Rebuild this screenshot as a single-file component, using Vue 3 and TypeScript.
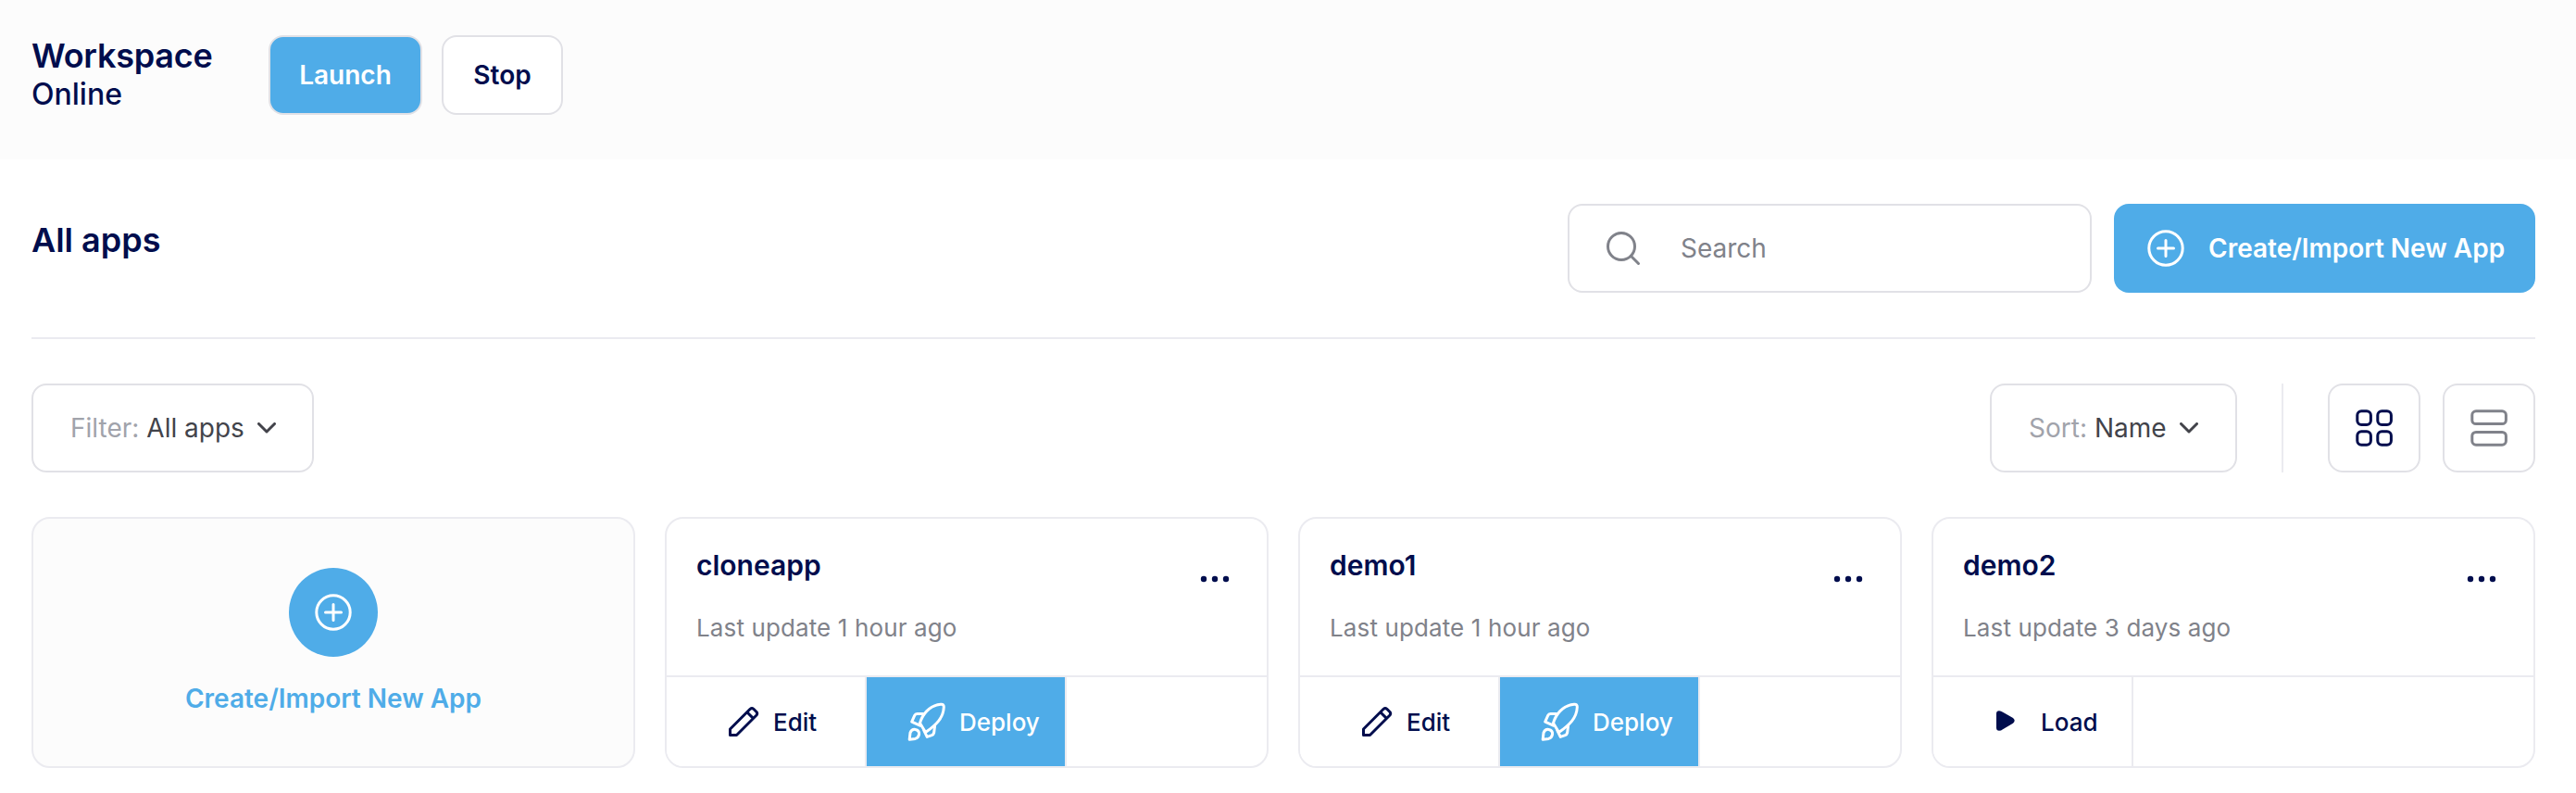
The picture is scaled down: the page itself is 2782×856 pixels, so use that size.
<script setup lang="ts">
interface AppCard {
  name: string
  updated: string
  loaded: boolean
}

const apps: AppCard[] = [
  { name: 'cloneapp', updated: 'Last update 1 hour ago', loaded: true },
  { name: 'demo1', updated: 'Last update 1 hour ago', loaded: true },
  { name: 'demo2', updated: 'Last update 3 days ago', loaded: false },
]
</script>

<template>
  <div class="page">
    <header class="workspace">
      <div class="status">
        <div class="status-name">Workspace</div>
        <div class="status-state">Online</div>
      </div>
      <div class="workspace-actions">
        <button class="btn primary launch">Launch</button>
        <button class="btn stop">Stop</button>
      </div>
    </header>

    <main class="content">
      <section class="titlebar">
        <h1 class="title">All apps</h1>
        <label class="search">
          <svg class="search-icon" width="40" height="40" viewBox="0 0 40 40">
            <circle cx="18" cy="18" r="14.5" />
            <path d="M28.3 28.3L36.5 36.5" />
          </svg>
          <span>Search</span>
        </label>
        <button class="create">
          <svg class="plus-icon" width="40" height="40" viewBox="0 0 40 40">
            <circle cx="20" cy="20" r="18.2" />
            <path d="M20 11.5V28.5M11.5 20H28.5" />
          </svg>
          <span>Create/Import New App</span>
        </button>
      </section>

      <section class="toolbar">
        <button class="select">
          <span class="select-label">Filter:</span>
          <span class="select-value">All apps</span>
          <svg class="chevron" width="20" height="12" viewBox="0 0 20 12"><path d="M1.5 1.5L10 10L18.5 1.5" /></svg>
        </button>
        <div class="toolbar-right">
          <button class="select sort">
            <span class="select-label">Sort:</span>
            <span class="select-value">Name</span>
            <svg class="chevron" width="20" height="12" viewBox="0 0 20 12"><path d="M1.5 1.5L10 10L18.5 1.5" /></svg>
          </button>
          <i class="separator"></i>
          <div class="views">
            <button class="view active">
              <svg width="40" height="40" viewBox="0 0 40 40">
                <rect x="1.8" y="1.8" width="14.6" height="14.6" rx="4.5" />
                <rect x="23.8" y="1.8" width="14.6" height="14.6" rx="4.5" />
                <rect x="1.8" y="23.7" width="14.6" height="14.6" rx="4.5" />
                <rect x="23.8" y="23.7" width="14.6" height="14.6" rx="4.5" />
              </svg>
            </button>
            <button class="view">
              <svg width="40" height="40" viewBox="0 0 40 40">
                <rect x="1.8" y="1.8" width="36.6" height="13.8" rx="4.2" />
                <rect x="1.8" y="24.4" width="36.6" height="13.8" rx="4.2" />
              </svg>
            </button>
          </div>
        </div>
      </section>

      <section class="grid">
        <article class="card new">
          <span class="bubble">
            <svg class="plus-icon" width="40" height="40" viewBox="0 0 40 40">
              <circle cx="20" cy="20" r="18.2" />
              <path d="M20 11.5V28.5M11.5 20H28.5" />
            </svg>
          </span>
          <span class="new-label">Create/Import New App</span>
        </article>

        <article v-for="app in apps" :key="app.name" class="card">
          <div class="card-head">
            <div>
              <h2 class="card-name">{{ app.name }}</h2>
              <p class="card-updated">{{ app.updated }}</p>
            </div>
            <svg class="dots" width="32" height="8" viewBox="0 0 32 8">
              <circle cx="4" cy="4" r="3.2" />
              <circle cx="16" cy="4" r="3.2" />
              <circle cx="28" cy="4" r="3.2" />
            </svg>
          </div>
          <div class="card-actions">
            <template v-if="app.loaded">
              <button class="action edit">
                <svg width="34" height="34" viewBox="0 0 34 34">
                  <path d="M2.5 25L24.2 3.3Q26 1.8 27.8 3.3L31 6.5Q32.4 8.2 31 10L9.5 31.5H2.5Z M20.8 6.8L27.4 13.4" />
                </svg>
                <span>Edit</span>
              </button>
              <button class="action deploy">
                <svg width="42" height="42" viewBox="0 0 42 42">
                  <path d="M13.5 22.5C16 14 23 3.5 36 2.2Q39.5 1.8 39.3 5.5C38.8 17 31 24.5 19.5 32.5Z" />
                  <path d="M17 12.4H10.5Q8.5 12.4 7.8 14.2L4.7 21.2L13.5 25.2" />
                  <path d="M29.6 25.4L28.6 33.2Q28.2 35 26.4 35.6L21.2 37.4L17.8 30.4" />
                  <path d="M2.2 40.2L3 33Q4.3 29 8.5 29.4Q13 30.2 12.6 34.6Q12 38.4 8.4 39.4Z" />
                </svg>
                <span>Deploy</span>
              </button>
            </template>
            <button v-else class="action load">
              <svg width="20" height="22" viewBox="0 0 20 22">
                <path d="M0 3.5Q0 0.3 3 0.3Q5 0.3 7 1.8L18 8Q21.4 10.8 18 13.8L7 20.2Q5 21.7 3 21.7Q0 21.7 0 18.5Z" />
              </svg>
              <span>Load</span>
            </button>
          </div>
        </article>
      </section>
    </main>
  </div>
</template>

<style>
body {
  margin: 0;
  background: #fff;
}
</style>

<style scoped>
.page {
  box-sizing: border-box;
  width: 2782px;
  height: 856px;
  overflow: hidden;
  background: #fff;
  color: #000d4d;
  font-family: Inter, "Liberation Sans", sans-serif;
  font-size: 28px;
}
.page * {
  box-sizing: border-box;
}
.page button {
  margin: 0;
  padding: 0;
  font-family: inherit;
  font-size: 28px;
  color: inherit;
  background: #fff;
}
svg {
  flex: none;
  fill: none;
  stroke: currentColor;
  stroke-width: 3;
  stroke-linecap: round;
  stroke-linejoin: round;
}
.workspace {
  display: flex;
  align-items: flex-start;
  height: 172px;
  padding: 38px 34px 0;
  background: #fcfcfc;
}
.status {
  width: 256px;
}
.status-name {
  font-size: 36px;
  font-weight: 600;
  line-height: 44px;
  letter-spacing: -0.25px;
}
.status-state {
  font-size: 32px;
  font-weight: 500;
  line-height: 39px;
}
.workspace-actions {
  display: flex;
  gap: 21px;
}
.workspace .btn {
  height: 86px;
  border: 2px solid #e1e1e6;
  border-radius: 16px;
  font-weight: 600;
}
.workspace .primary {
  background: #4face8;
  color: #fff;
}
.launch {
  width: 166px;
}
.stop {
  width: 131px;
}
.content {
  padding: 48px 44px 0 34px;
}
.titlebar {
  display: flex;
  height: 146px;
  border-bottom: 2px solid #ebebf0;
}
.title {
  flex: 1;
  margin: 16px 0 0;
  font-size: 36px;
  line-height: 46px;
  font-weight: 600;
}
.search {
  display: flex;
  align-items: center;
  width: 566px;
  height: 96px;
  margin-right: 24px;
  padding-left: 38px;
  border: 2px solid #e1e1e6;
  border-radius: 16px;
  color: #80828a;
}
.search-icon {
  margin-right: 42px;
}
.create {
  display: flex;
  align-items: center;
  width: 455px;
  height: 96px;
  border: 0;
  border-radius: 16px;
}
.page .create {
  padding-left: 36px;
  background: #4face8;
  color: #fff;
  font-weight: 600;
}
.create .plus-icon {
  margin-right: 26px;
}
.toolbar {
  display: flex;
  justify-content: space-between;
  height: 96px;
  margin: 48px 0;
}
.toolbar-right {
  display: flex;
}
.select {
  display: flex;
  align-items: center;
  width: 305px;
  border: 2px solid #e1e1e6;
  border-radius: 16px;
}
.page .select {
  padding-left: 40px;
}
.select-label {
  margin-right: 8px;
  color: #a1a3ab;
}
.select-value {
  color: #42434a;
}
.chevron {
  margin-left: 14px;
  color: #42434a;
}
.sort {
  width: 267px;
}
.separator {
  width: 2px;
  margin: 0 48px;
  background: #ebebf0;
}
.views {
  display: flex;
  gap: 24px;
}
.view {
  display: flex;
  align-items: center;
  justify-content: center;
  width: 100px;
  border: 2px solid #e1e1e6;
  border-radius: 16px;
}
.page .view {
  color: #80828a;
}
.page .view.active {
  color: #000d4d;
}
.grid {
  display: grid;
  grid-template-columns: repeat(4, 1fr);
  gap: 32px;
}
.card {
  display: flex;
  flex-direction: column;
  height: 271px;
  overflow: hidden;
  border: 2px solid #ebebf0;
  border-radius: 20px;
  background: #fff;
}
.new {
  align-items: center;
  padding-top: 53px;
  background: #fcfcfc;
  color: #4face8;
}
.bubble {
  display: flex;
  align-items: center;
  justify-content: center;
  width: 96px;
  height: 96px;
  border-radius: 50%;
  background: #4face8;
  color: #fff;
}
.new-label {
  margin-top: 28px;
  font-weight: 600;
  line-height: 34px;
}
.card-head {
  display: flex;
  justify-content: space-between;
  height: 169px;
  padding: 32px 40px 0 32px;
}
.card-name {
  margin: 0;
  font-size: 30px;
  font-weight: 600;
  line-height: 36px;
}
.card-updated {
  margin: 34px 0 0;
  font-size: 26px;
  line-height: 32px;
  letter-spacing: 0.12px;
  color: #80828a;
}
.dots {
  margin-top: 29px;
  fill: currentColor;
  stroke: none;
}
.card-actions {
  display: flex;
  height: 98px;
  border-top: 2px solid #ebebf0;
}
.action {
  display: flex;
  align-items: center;
  width: 216px;
  border: 0;
  border-right: 2px solid #ebebf0;
}
.page .action {
  font-size: 26px;
  font-weight: 500;
}
.page .edit {
  padding-left: 66px;
}
.edit svg {
  margin-right: 15px;
}
.page .deploy {
  padding-left: 44px;
  background: #4face8;
  color: #fff;
}
.deploy svg {
  margin-right: 14px;
}
.page .load {
  padding-left: 68px;
}
.load svg {
  margin: 0 28px 3px 0;
  fill: currentColor;
  stroke: none;
}
</style>
